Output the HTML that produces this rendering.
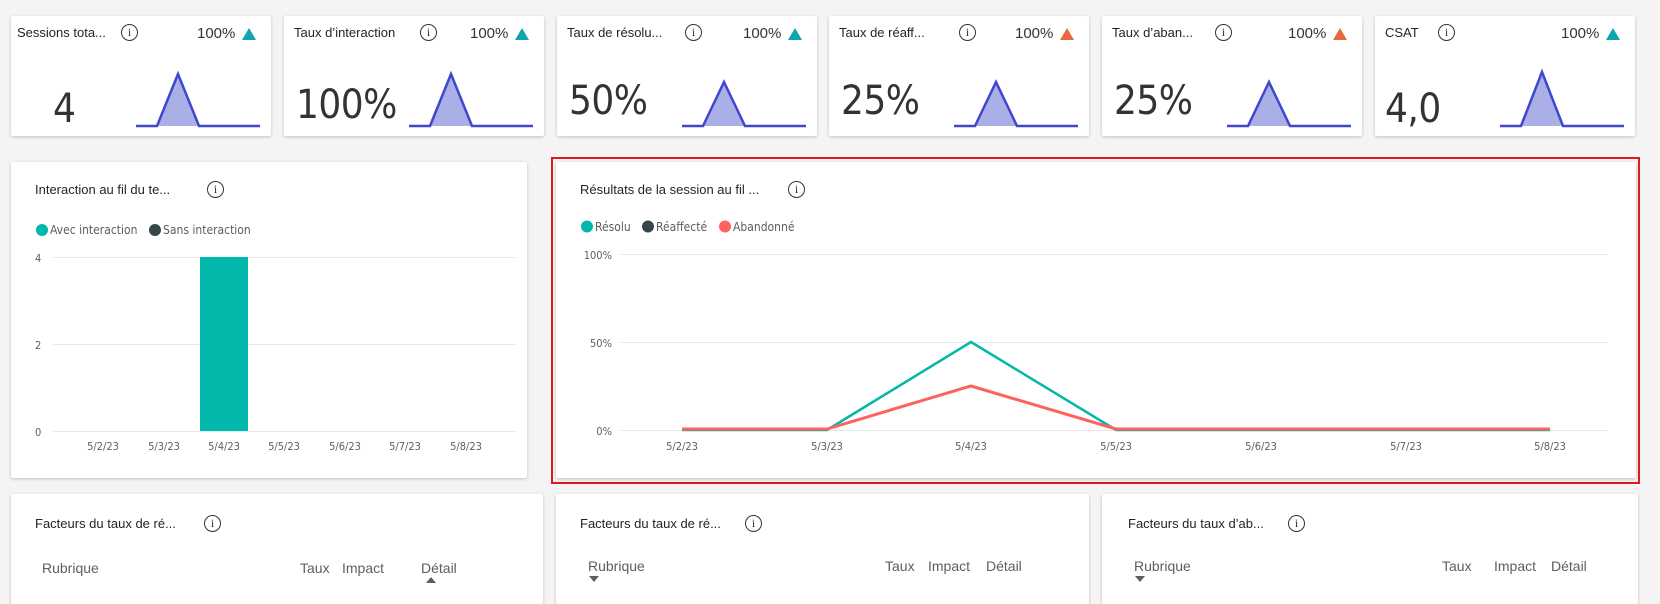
<!DOCTYPE html>
<html><head><meta charset="utf-8"><style>
*{margin:0;padding:0;box-sizing:border-box}
body{width:1660px;height:594px;background:#f4f4f4;position:relative;overflow:hidden;font-family:"Liberation Sans","DejaVu Sans",sans-serif;color:#252423}
.card{position:absolute;background:#fff;border-radius:2px;box-shadow:0 1px 3px rgba(0,0,0,.22)}
.t{position:absolute;font-size:13px;white-space:nowrap;color:#252423}
.info{position:absolute;width:17px;height:17px;border:1.3px solid #333;border-radius:50%;font-size:12px;line-height:15px;text-align:center;font-family:"Liberation Serif",serif;color:#333}
.pct{position:absolute;font-size:15px;color:#333}
.tri{position:absolute;width:0;height:0;border-left:7px solid transparent;border-right:7px solid transparent;border-bottom:12px solid #0ea5b0}
.big{position:absolute;font-size:40px;color:#333;font-family:"DejaVu Sans Condensed","DejaVu Sans",sans-serif;letter-spacing:-0.5px}
.sp{position:absolute;left:0;top:0}
.ax{font-size:11px;fill:#605e5c;font-family:"DejaVu Sans Condensed","Liberation Sans",sans-serif}
.h{position:absolute;font-size:14px;color:#605e5c}
.dn{position:absolute;width:0;height:0;border-left:5px solid transparent;border-right:5px solid transparent;border-top:6px solid #605e5c}
.up{position:absolute;width:0;height:0;border-left:5px solid transparent;border-right:5px solid transparent;border-bottom:6px solid #605e5c}
</style></head><body>

<div class="card" style="left:11px;top:16px;width:260px;height:120px">
 <div class="t" style="left:6px;top:9px">Sessions tota...</div><div class="info" style="left:110px;top:8px">i</div>
 <div class="pct" style="left:186px;top:9px">100%</div><div class="tri" style="left:231px;top:12px"></div>
 <div class="big" style="left:42px;top:70px">4</div>
 <svg class="sp" width="260" height="120"><path d="M125 110 L146 110 L167 58 L188 110 L249 110" fill="#aab0e6" stroke="#3f48cc" stroke-width="2.5"/></svg>
</div>
<div class="card" style="left:284px;top:16px;width:260px;height:120px">
 <div class="t" style="left:10px;top:9px">Taux d’interaction</div><div class="info" style="left:136px;top:8px">i</div>
 <div class="pct" style="left:186px;top:9px">100%</div><div class="tri" style="left:231px;top:12px"></div>
 <div class="big" style="left:12px;top:66px">100%</div>
 <svg class="sp" width="260" height="120"><path d="M125 110 L146 110 L167 58 L188 110 L249 110" fill="#aab0e6" stroke="#3f48cc" stroke-width="2.5"/></svg>
</div>
<div class="card" style="left:557px;top:16px;width:260px;height:120px">
 <div class="t" style="left:10px;top:9px">Taux de résolu...</div><div class="info" style="left:128px;top:8px">i</div>
 <div class="pct" style="left:186px;top:9px">100%</div><div class="tri" style="left:231px;top:12px"></div>
 <div class="big" style="left:12px;top:62px">50%</div>
 <svg class="sp" width="260" height="120"><path d="M125 110 L146 110 L167 66 L188 110 L249 110" fill="#aab0e6" stroke="#3f48cc" stroke-width="2.5"/></svg>
</div>
<div class="card" style="left:829px;top:16px;width:260px;height:120px">
 <div class="t" style="left:10px;top:9px">Taux de réaff...</div><div class="info" style="left:130px;top:8px">i</div>
 <div class="pct" style="left:186px;top:9px">100%</div><div class="tri" style="left:231px;top:12px;border-bottom-color:#e8683f"></div>
 <div class="big" style="left:12px;top:62px">25%</div>
 <svg class="sp" width="260" height="120"><path d="M125 110 L146 110 L167 66 L188 110 L249 110" fill="#aab0e6" stroke="#3f48cc" stroke-width="2.5"/></svg>
</div>
<div class="card" style="left:1102px;top:16px;width:260px;height:120px">
 <div class="t" style="left:10px;top:9px">Taux d’aban...</div><div class="info" style="left:113px;top:8px">i</div>
 <div class="pct" style="left:186px;top:9px">100%</div><div class="tri" style="left:231px;top:12px;border-bottom-color:#e8683f"></div>
 <div class="big" style="left:12px;top:62px">25%</div>
 <svg class="sp" width="260" height="120"><path d="M125 110 L146 110 L167 66 L188 110 L249 110" fill="#aab0e6" stroke="#3f48cc" stroke-width="2.5"/></svg>
</div>
<div class="card" style="left:1375px;top:16px;width:260px;height:120px">
 <div class="t" style="left:10px;top:9px">CSAT</div><div class="info" style="left:63px;top:8px">i</div>
 <div class="pct" style="left:186px;top:9px">100%</div><div class="tri" style="left:231px;top:12px"></div>
 <div class="big" style="left:10px;top:70px">4,0</div>
 <svg class="sp" width="260" height="120"><path d="M125 110 L146 110 L167 56 L188 110 L249 110" fill="#aab0e6" stroke="#3f48cc" stroke-width="2.5"/></svg>
</div>

<div class="card" style="left:11px;top:162px;width:516px;height:316px">
 <div class="t" style="left:24px;top:20px">Interaction au fil du te...</div><div class="info" style="left:196px;top:19px">i</div>
</div>
<svg style="position:absolute;left:0;top:0" width="1660" height="594">
 <circle cx="42" cy="230" r="6" fill="#01b8aa"/><text x="50" y="234" class="ax" style="font-size:12px">Avec interaction</text>
 <circle cx="155" cy="230" r="6" fill="#374649"/><text x="163" y="234" class="ax" style="font-size:12px">Sans interaction</text>
 <g stroke="#e8e8e8" stroke-width="1"><line x1="53" y1="257.5" x2="516" y2="257.5"/><line x1="53" y1="344.5" x2="516" y2="344.5"/><line x1="53" y1="431.5" x2="516" y2="431.5"/></g>
 <text x="35" y="262" class="ax">4</text><text x="35" y="349" class="ax">2</text><text x="35" y="436" class="ax">0</text>
 <rect x="200" y="257" width="48" height="174" fill="#01b8aa"/>
 <g class="ax" text-anchor="middle"><text x="103" y="450">5/2/23</text><text x="164" y="450">5/3/23</text><text x="224" y="450">5/4/23</text><text x="284" y="450">5/5/23</text><text x="345" y="450">5/6/23</text><text x="405" y="450">5/7/23</text><text x="466" y="450">5/8/23</text></g>
</svg>

<div class="card" style="left:556px;top:162px;width:1080px;height:316px"></div>
<div style="position:absolute;left:551px;top:157px;width:1089px;height:327px;border:2px solid #e0191c"></div>
<div class="t" style="left:580px;top:182px">Résultats de la session au fil ...</div><div class="info" style="left:788px;top:181px">i</div>
<svg style="position:absolute;left:0;top:0" width="1660" height="594">
 <circle cx="587" cy="226.5" r="6" fill="#01b8aa"/><text x="595" y="231" class="ax" style="font-size:12px">Résolu</text>
 <circle cx="648" cy="226.5" r="6" fill="#374649"/><text x="656" y="231" class="ax" style="font-size:12px">Réaffecté</text>
 <circle cx="725" cy="226.5" r="6" fill="#fd625e"/><text x="733" y="231" class="ax" style="font-size:12px">Abandonné</text>
 <g stroke="#e8e8e8"><line x1="620" y1="254.5" x2="1608" y2="254.5"/><line x1="620" y1="342.5" x2="1608" y2="342.5"/><line x1="620" y1="430.5" x2="1608" y2="430.5"/></g>
 <g class="ax" text-anchor="end"><text x="612" y="259">100%</text><text x="612" y="347">50%</text><text x="612" y="435">0%</text></g>
 <polyline points="682,430 827,430 971,342 1116,430 1550,430" fill="none" stroke="#01b8aa" stroke-width="2.5"/>
 <polyline points="682,429 827,429 971,386 1116,429 1550,429" fill="none" stroke="#fd625e" stroke-width="3"/>
 <g class="ax" text-anchor="middle"><text x="682" y="450">5/2/23</text><text x="827" y="450">5/3/23</text><text x="971" y="450">5/4/23</text><text x="1116" y="450">5/5/23</text><text x="1261" y="450">5/6/23</text><text x="1406" y="450">5/7/23</text><text x="1550" y="450">5/8/23</text></g>
</svg>

<div class="card" style="left:11px;top:494px;width:532px;height:110px">
 <div class="t" style="left:24px;top:22px">Facteurs du taux de ré...</div><div class="info" style="left:193px;top:21px">i</div>
 <div class="h" style="left:31px;top:66px">Rubrique</div><div class="h" style="left:289px;top:66px">Taux</div><div class="h" style="left:331px;top:66px">Impact</div><div class="h" style="left:410px;top:66px">Détail</div><div class="up" style="left:415px;top:83px"></div>
</div>
<div class="card" style="left:556px;top:494px;width:533px;height:110px">
 <div class="t" style="left:24px;top:22px">Facteurs du taux de ré...</div><div class="info" style="left:189px;top:21px">i</div>
 <div class="h" style="left:32px;top:64px">Rubrique</div><div class="dn" style="left:33px;top:82px"></div><div class="h" style="left:329px;top:64px">Taux</div><div class="h" style="left:372px;top:64px">Impact</div><div class="h" style="left:430px;top:64px">Détail</div>
</div>
<div class="card" style="left:1102px;top:494px;width:536px;height:110px">
 <div class="t" style="left:26px;top:22px">Facteurs du taux d’ab...</div><div class="info" style="left:186px;top:21px">i</div>
 <div class="h" style="left:32px;top:64px">Rubrique</div><div class="dn" style="left:33px;top:82px"></div><div class="h" style="left:340px;top:64px">Taux</div><div class="h" style="left:392px;top:64px">Impact</div><div class="h" style="left:449px;top:64px">Détail</div>
</div>
</body></html>
